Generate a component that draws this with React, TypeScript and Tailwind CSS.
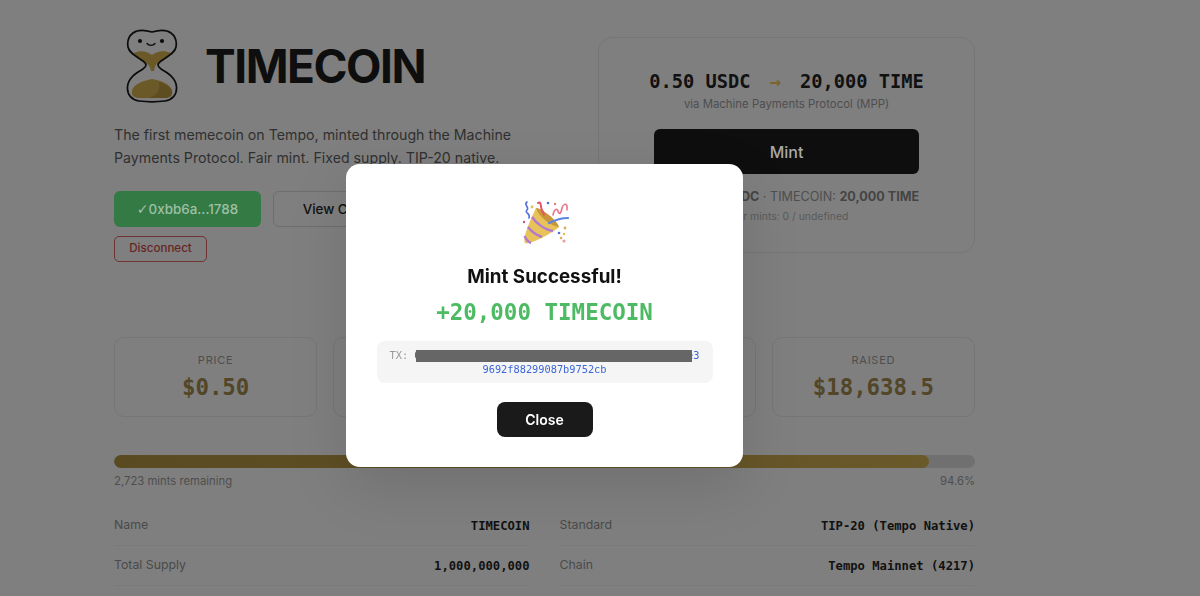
const sans = "font-['Inter','Liberation_Sans',sans-serif]";
const mono = "font-['DejaVu_Sans_Mono','Liberation_Mono',monospace]";

function Logo() {
  return (
    <svg width="76" height="76" viewBox="0 0 76 76" fill="none" className="shrink-0">
      <g transform="translate(13 1)">
        <path d="M7 24 C13 21 20 22 25 26 C30 22 37 21 44 24 C42 28 36 31 31 34 C28 36 28 38 27 42 L24 42 C23 38 22 36 19 34 C14 31 9 28 7 24 Z" fill="#6c5928" />
        <path d="M5 62 C6 55 16 52 25 50 C35 52 44 55 45 62 C46 67 42 69 38 69 H12 C8 69 4 67 5 62 Z" fill="#6c5928" />
        <path d="M22 69 C30 66 34 60 32 53 C38 55 44 58 45 62 C46 67 42 69 38 69 Z" fill="#5f4d22" />
        <path d="M25 3 C32 1 40 1 44 4 C48 7 50 12 49 18 C48 24 40 28 34 32 C30 35 30 37 34 40 C41 44 49 49 49.5 58 C50 66 45 71 38 72 C30 73 20 73 12 72 C5 71 0 66 0.5 58 C1 49 9 44 16 40 C20 37 20 35 16 32 C10 28 2 24 1 18 C0 12 2 7 6 4 C10 1 18 1 25 3 Z" stroke="#0c0c0c" strokeWidth="1.7" />
        <circle cx="13" cy="12" r="2.1" fill="#0c0c0c" />
        <circle cx="35" cy="12" r="2.1" fill="#0c0c0c" />
        <path d="M20 14.5 C22 17 26 17 28 14.5" stroke="#0c0c0c" strokeWidth="1.3" strokeLinecap="round" />
      </g>
    </svg>
  );
}

function Popper() {
  return (
    <svg width="48" height="48" viewBox="0 0 48 48" fill="none">
      <path d="M4 45 C1 42 8 24 15 10 C20 10 36 22 38 29 C30 36 9 47 4 45 Z" fill="#e9c25a" />
      <path d="M15 10 C20 10 36 22 38 29 C31 28 19 21 15 10 Z" fill="#c8953a" />
      <path d="M11 19 C15 25 24 32 32 33" stroke="#b07ad0" strokeWidth="2.4" />
      <path d="M7 29 C10 33 15 37 21 39" stroke="#b07ad0" strokeWidth="2.4" />
      <path d="M3.5 38 C5 41 7 44 10 45" stroke="#b07ad0" strokeWidth="2.4" />
      <path d="M28 25 C34 22 40 20 47 20" stroke="#5b86e0" strokeWidth="2.2" strokeLinecap="round" />
      <path d="M6 4 C2 7 9 9 6 12 C3 15 10 15 8 20" stroke="#5570d8" strokeWidth="1.6" strokeLinecap="round" />
      <path d="M17 5 C21 3 19 9 21 12 C22 14 23 15 23 17" stroke="#e0566a" strokeWidth="2" strokeLinecap="round" />
      <path d="M32 17 C33 11 36 10 37 13 C38 17 40 16 41 10 C42 6 45 5 46 8 C46 10 46 11 46 12" stroke="#e8788a" strokeWidth="1.6" strokeLinecap="round" />
      <circle cx="11" cy="9" r="1.4" fill="#e4c04a" />
      <circle cx="27" cy="5" r="1.3" fill="#5570d8" />
      <circle cx="34" cy="6" r="1.2" fill="#e8788a" />
      <circle cx="3" cy="24" r="1.2" fill="#d05070" />
      <circle cx="38" cy="35" r="1.3" fill="#5570d8" />
      <circle cx="44" cy="30" r="1.4" fill="#e0a860" />
      <circle cx="40" cy="40" r="1.3" fill="#e0a860" />
      <circle cx="43" cy="36" r="1.2" fill="#e4c04a" />
      <circle cx="43" cy="43" r="1.6" fill="#e8a0a0" />
    </svg>
  );
}

function Stat({ label, value }: { label?: string; value?: string }) {
  return (
    <div className="h-[80px] rounded-[10px] border border-[#767676] flex flex-col items-center pt-[14px]">
      {label && <div className="text-[11px] leading-[16px] tracking-[0.07em] text-[#4e4e4e]">{label}</div>}
      {value && <div className={`${mono} mt-[4px] text-[22.4px] leading-[30px] font-bold text-[#524628]`}>{value}</div>}
    </div>
  );
}

function Row({ label, value }: { label: string; value: string }) {
  return (
    <div className="h-[40px] flex items-center justify-between border-b border-[#797979]">
      <span className="text-[12.3px] text-[#4a4a4a]">{label}</span>
      <span className={`${mono} mt-[1px] text-[12.2px] font-bold text-[#111111]`}>{value}</span>
    </div>
  );
}

export default function App() {
  return (
    <div className={`${sans} relative h-[596px] w-[1200px] overflow-hidden bg-[#7f7f7f]`}>
      <div className="mx-[114px] w-[861px] pt-[28px]">
        <div className="flex h-[289px] items-start justify-between">
          <div className="w-[436px]">
            <div className="flex items-center gap-[15px]">
              <Logo />
              <h1 className="text-[46px] leading-[76px] font-bold tracking-[-0.032em] text-[#0e0e0e]">TIMECOIN</h1>
            </div>
            <p className="mt-[19px] text-[14.2px] leading-[23px] text-[#303030]">
              The first memecoin on Tempo, minted through the Machine Payments Protocol. Fair mint. Fixed supply. TIP-20 native.
            </p>
            <div className="mt-[22px] flex gap-[12px]">
              <button className="h-[36px] w-[147px] rounded-[6px] bg-[#347a45] text-[13.4px] font-medium text-[#9fc0a5]">
                <span className="font-['DejaVu_Sans',sans-serif] font-bold text-[14px]">✓</span>0xbb6a...1788
              </button>
              <button className="h-[36px] w-[150px] rounded-[6px] border border-[#6e6e6e] text-[13.4px] font-medium text-[#111111]">View Contract</button>
            </div>
            <button className="mt-[9px] block h-[26px] w-[93px] rounded-[5px] border border-[#703232] text-[11.6px] font-medium text-[#682424]">Disconnect</button>
          </div>
          <div className="mt-[9px] h-[216px] w-[377px] rounded-[14px] border border-[#767676] flex flex-col items-center pt-[31px]">
            <div className={`${mono} text-[18.7px] leading-[26px] font-bold text-[#111111] flex`}>
              <span>0.50 USDC</span>
              <span className="mx-[19px] text-[#7d6229]">→</span>
              <span>20,000 TIME</span>
            </div>
            <div className="text-[11.4px] leading-[18px] text-[#4e4e4e]">via Machine Payments Protocol (MPP)</div>
            <button className="mt-[16px] h-[45px] w-[265px] rounded-[6px] bg-[#0e0e0e] text-[16px] font-medium text-[#a8a8a8]">Mint</button>
            <div className="mt-[14px] text-[12.6px] leading-[18px] text-[#4e4e4e]">
              Price: <b className="font-bold text-[#454545]">0.50 USDC</b> · TIMECOIN: <b className="font-bold text-[#454545]">20,000 TIME</b>
            </div>
            <div className="mt-[2px] text-[10.4px] leading-[18px] text-[#5a5a5a]">Your mints: 0 / undefined</div>
          </div>
        </div>

        <div className="mt-[20px] grid grid-cols-4 gap-[16px]">
          <Stat label="PRICE" value="$0.50" />
          <Stat />
          <Stat />
          <Stat label="RAISED" value="$18,638.5" />
        </div>

        <div className="mt-[38px] h-[13px] rounded-full bg-[#707070] overflow-hidden">
          <div className="h-full rounded-full bg-gradient-to-r from-[#594a22] to-[#6a5929]" style={{ width: "94.6%" }} />
        </div>
        <div className="mt-[5px] flex justify-between text-[11.3px] leading-[16px] text-[#4e4e4e]">
          <span>2,723 mints remaining</span>
          <span>94.6%</span>
        </div>

        <div className="mt-[17px] grid grid-cols-2 gap-x-[30px]">
          <Row label="Name" value="TIMECOIN" />
          <Row label="Standard" value="TIP-20 (Tempo Native)" />
          <Row label="Total Supply" value="1,000,000,000" />
          <Row label="Chain" value="Tempo Mainnet (4217)" />
        </div>
      </div>

      <div className="fixed inset-0 flex items-start pl-[346px] pt-[164px]">
        <div className="h-[303px] w-[397px] rounded-[14px] bg-white px-[30.5px] flex flex-col items-center pt-[34px] shadow-[0_20px_60px_rgba(0,0,0,0.12)]">
          <Popper />
          <h2 className="mt-[17px] text-[18.8px] leading-[28px] font-bold text-[#111111]">Mint Successful!</h2>
          <div className={`${mono} mt-[5px] text-[22.5px] leading-[32px] font-bold text-[#4cbb63]`}>+20,000 TIMECOIN</div>
          <div className={`${mono} relative mt-[13px] w-full rounded-[8px] bg-[#f5f5f5] px-[12px] py-[7px] text-center text-[10.3px] leading-[14px] break-all text-[#999999]`}>
            TX: <span className="text-[#3b66d8]">0x000000000000000000000000000000000000000000e39692f88299087b9752cb</span>
            <div className="absolute left-[39px] top-[9px] h-[12px] w-[276px] bg-[#666666]" />
          </div>
          <button className="mt-[19px] h-[35px] w-[96px] rounded-[8px] bg-[#1a1a1a] text-[14px] font-semibold text-white">Close</button>
        </div>
      </div>
    </div>
  );
}
